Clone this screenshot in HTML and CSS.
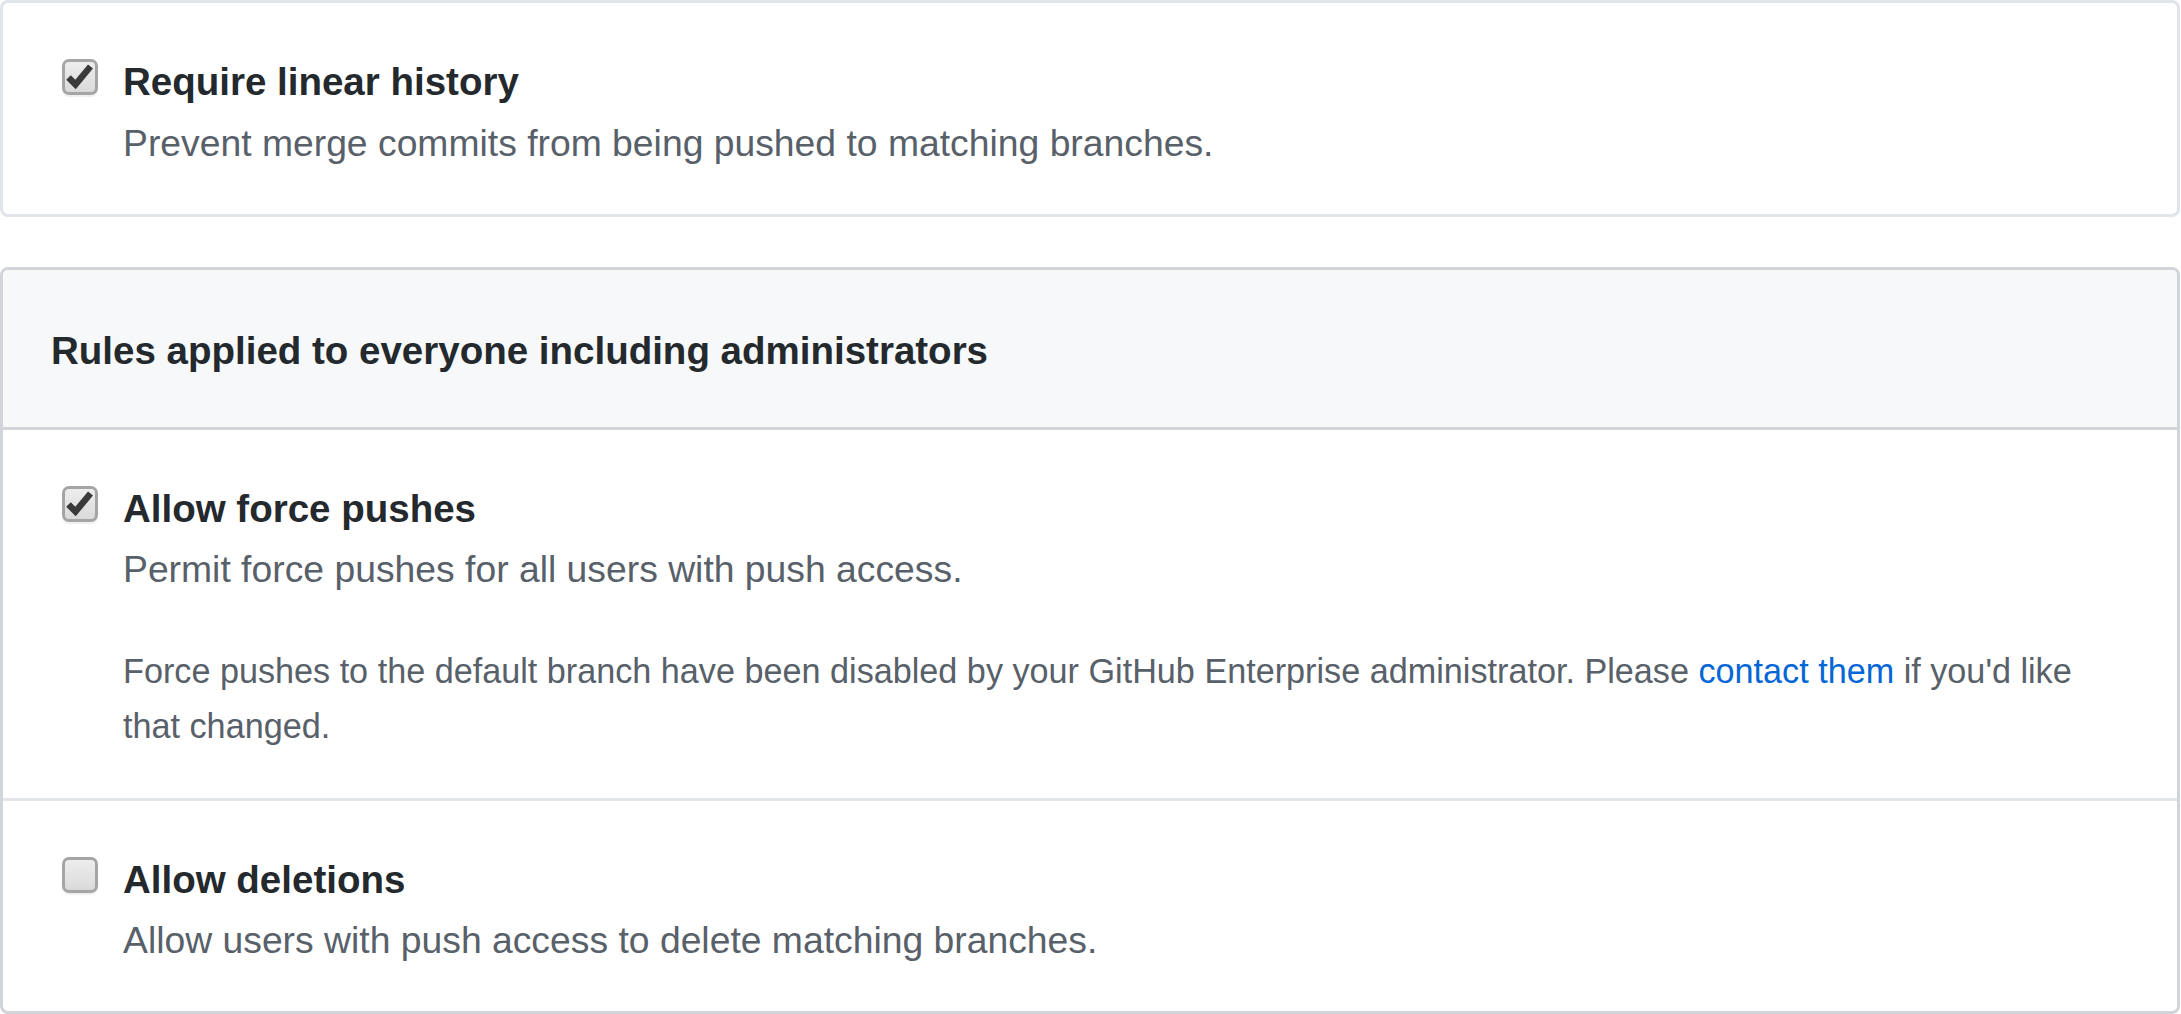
FILE: index.html
```html
<!DOCTYPE html>
<html lang="en">
<head>
<meta charset="utf-8">
<title>Branch protection rules</title>
<link rel="stylesheet" href="styles.css">
</head>
<body>
<div class="page">
  <section class="box box-light">
    <div class="rule">
      <span class="cb cb-checked">
        <svg viewBox="0 0 30 30" width="30" height="30" aria-hidden="true"><path d="M3.5 15.5 L10.5 22.5 L25.5 4.5" fill="none" stroke="#3a3a3a" stroke-width="6.5" stroke-linejoin="miter" stroke-miterlimit="10"/></svg>
      </span>
      <div class="rule-text">
        <div class="rule-title">Require linear history</div>
        <p class="rule-desc">Prevent merge commits from being pushed to matching branches.</p>
      </div>
    </div>
  </section>

  <section class="box box-strong">
    <div class="box-header">
      <h3 class="box-title">Rules applied to everyone including administrators</h3>
    </div>
    <div class="rule">
      <span class="cb cb-checked">
        <svg viewBox="0 0 30 30" width="30" height="30" aria-hidden="true"><path d="M3.5 15.5 L10.5 22.5 L25.5 4.5" fill="none" stroke="#3a3a3a" stroke-width="6.5" stroke-linejoin="miter" stroke-miterlimit="10"/></svg>
      </span>
      <div class="rule-text">
        <div class="rule-title">Allow force pushes</div>
        <p class="rule-desc">Permit force pushes for all users with push access.</p>
        <p class="rule-note">Force pushes to the default branch have been disabled by your GitHub Enterprise administrator. Please <a href="#" class="link">contact them</a> if you'd like that changed.</p>
      </div>
    </div>
    <div class="rule rule-divided">
      <span class="cb"></span>
      <div class="rule-text">
        <div class="rule-title">Allow deletions</div>
        <p class="rule-desc">Allow users with push access to delete matching branches.</p>
      </div>
    </div>
  </section>
</div>
</body>
</html>
```

FILE: styles.css
```css
html, body {
  margin: 0;
  padding: 0;
  background: #ffffff;
}

body {
  font-family: "Liberation Sans", Arial, sans-serif;
  color: #24292e;
}

.page {
  width: 2180px;
  display: flex;
  flex-direction: column;
  gap: 50px;
}

.box {
  border-style: solid;
  border-width: 3px;
  border-radius: 8px;
  background: #ffffff;
  overflow: hidden;
}

.box-light {
  border-color: #e1e4e8;
}

.box-strong {
  border-color: #d1d5da;
}

.box-header {
  background: #f6f8fa;
  border-bottom: 3px solid #d1d5da;
  padding: 57px 45px 52px 48px;
}

.box-title {
  margin: 0;
  font-size: 38.5px;
  line-height: 48px;
  font-weight: 700;
  color: #24292e;
}

.rule {
  display: flex;
  align-items: flex-start;
  gap: 25px;
  padding: 55px 59px 46px 59px;
}

.rule-divided {
  border-top: 3px solid #e1e4e8;
}

.cb {
  flex: none;
  box-sizing: border-box;
  width: 36px;
  height: 36px;
  margin-top: 1px;
  border: 3px solid #a5a5a5;
  border-radius: 7px;
  background: linear-gradient(#ededed, #dadada);
  box-shadow: 0 2px 0 rgba(0, 0, 0, 0.06);
  display: flex;
  align-items: center;
  justify-content: center;
  overflow: hidden;
}

.cb svg {
  display: block;
  flex: none;
}

.rule-text {
  flex: 1;
  min-width: 0;
}

.rule-title {
  font-size: 38.5px;
  line-height: 48px;
  font-weight: 700;
  color: #24292e;
}

.rule-desc {
  margin: 11.5px 0 0 0;
  font-size: 37.3px;
  line-height: 50px;
  color: #586069;
}

.rule-note {
  margin: 49.5px 0 -2px 0;
  font-size: 34.2px;
  line-height: 55px;
  color: #586069;
}

.link {
  color: #0366d6;
  text-decoration: none;
}
```
